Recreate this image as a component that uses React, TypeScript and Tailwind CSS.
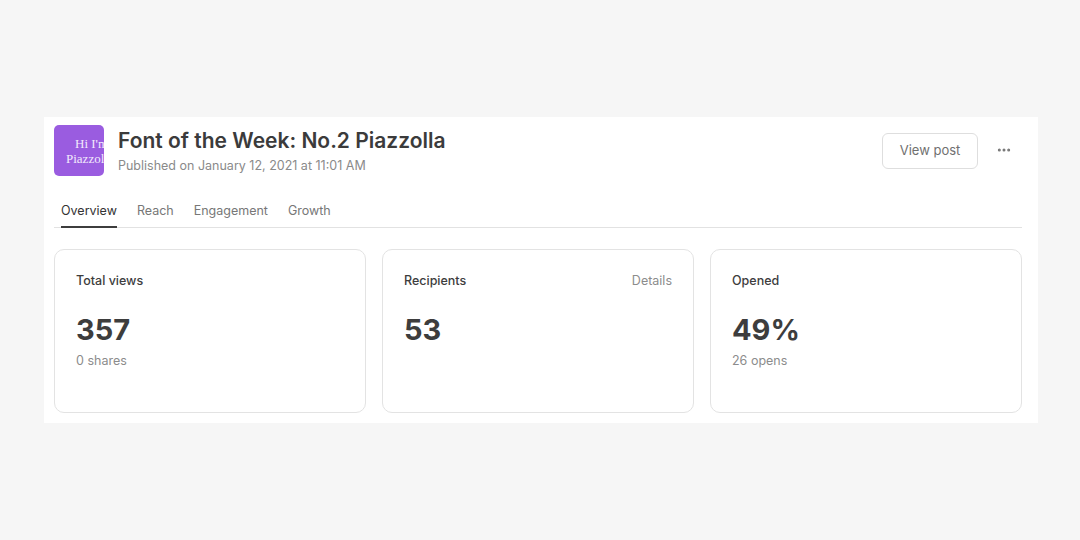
import { MoreHorizontal } from "lucide-react";

const stats = [
  { label: "Total views", value: "357", sub: "0 shares", details: false },
  { label: "Recipients", value: "53", sub: "", details: true },
  { label: "Opened", value: "49%", sub: "26 opens", details: false },
];

function StatCard({ label, value, sub, details }: (typeof stats)[number]) {
  return (
    <div className="h-[164px] flex-1 rounded-[10px] border border-[#e3e3e3] bg-white px-[21px] pt-[23px]">
      <div className="flex items-center justify-between h-[18px]">
        <span className="text-[12.5px] font-medium text-[#3d3d3d]">{label}</span>
        {details && <span className="text-[12.5px] text-[#8c8c8c]">Details</span>}
      </div>
      <div className="mt-[23px] text-[29px] font-bold leading-[32px] text-[#3d3d3d]">{value}</div>
      {sub && <div className="mt-[6px] text-[12.5px] text-[#8c8c8c]">{sub}</div>}
    </div>
  );
}

export default function App() {
  return (
    <div
      className="h-[540px] w-[1080px] bg-[#f6f6f6] pl-[44px] pt-[117px]"
      style={{ fontFamily: "Inter, 'Liberation Sans', sans-serif" }}
    >
      <div className="h-[306px] w-[994px] bg-white pl-[10px] pr-[16px] pt-[8px]">
        {/* header */}
        <div className="flex items-start">
          <div className="relative h-[51px] w-[50px] shrink-0 overflow-hidden rounded-[5px] bg-[#9a5ce0] text-[13px] leading-[14px] text-[#f2eafc]"
            style={{ fontFamily: "'Liberation Serif', 'DejaVu Serif', serif" }}
          >
            <div className="absolute left-[21px] top-[12px] whitespace-nowrap">Hi I'm</div>
            <div className="absolute left-[12px] top-[27px] whitespace-nowrap">Piazzolla</div>
          </div>
          <div className="ml-[14px] flex-1 pt-[2px]">
            <h1 className="text-[21px] font-semibold leading-[28px] text-[#3b3b3b]">
              Font of the Week: No.2 Piazzolla
            </h1>
            <p className="mt-[2px] text-[12.5px] text-[#8a8a8a]">Published on January 12, 2021 at 11:01 AM</p>
          </div>
          <button className="mt-[8px] h-[36px] w-[96px] rounded-[6px] border border-[#dedede] bg-white text-[13px] text-[#707070]">
            View post
          </button>
          <div className="ml-[18px] mr-[10px] mt-[17px] text-[#777]">
            <MoreHorizontal size={16} strokeWidth={2.5} />
          </div>
        </div>

        {/* tabs */}
        <div className="mt-[26px] flex border-b border-[#e2e2e2] text-[12.5px] text-[#777]">
          <div className="ml-[7px] -mb-px border-b-2 border-[#3d3d3d] pb-[5px] text-[#333]">Overview</div>
          <div className="ml-[20px] pb-[5px]">Reach</div>
          <div className="ml-[20px] pb-[5px]">Engagement</div>
          <div className="ml-[20px] pb-[5px]">Growth</div>
        </div>

        {/* stats */}
        <div className="mt-[21px] flex gap-[16px]">
          {stats.map((s) => (
            <StatCard key={s.label} {...s} />
          ))}
        </div>
      </div>
    </div>
  );
}
